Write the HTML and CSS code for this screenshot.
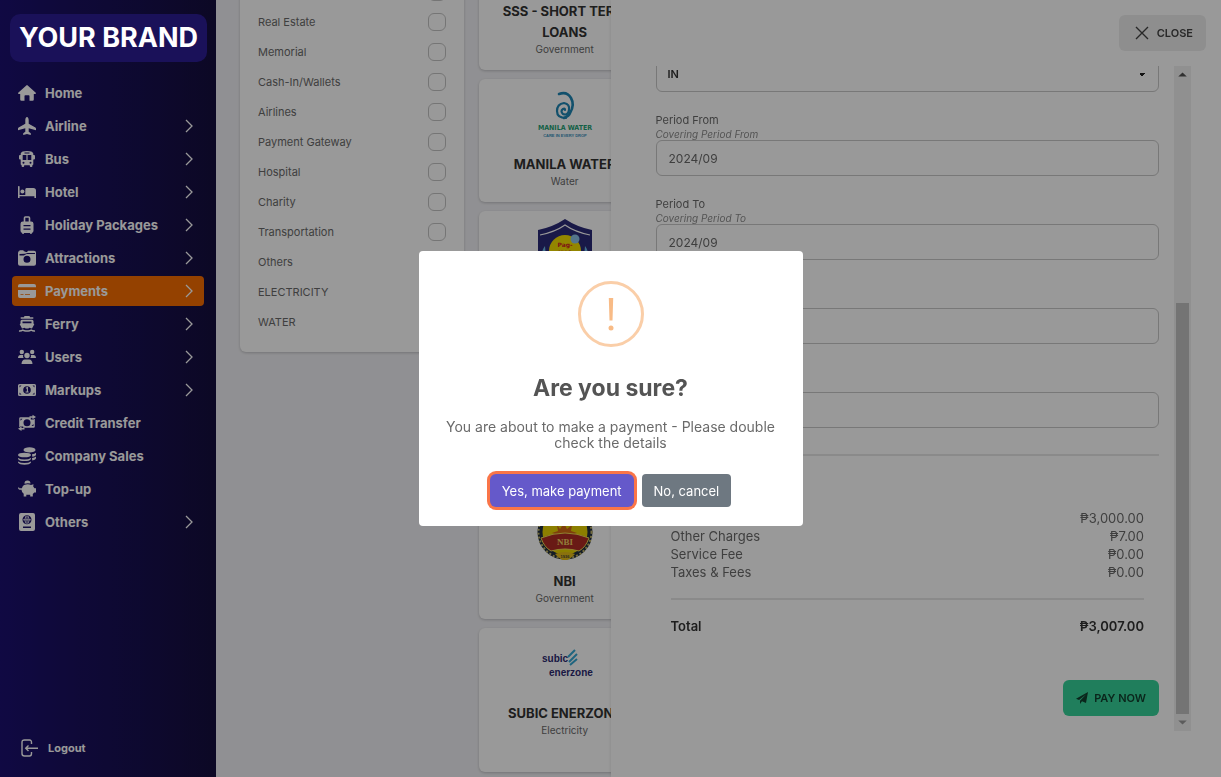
FILE: index.html
```html
<!DOCTYPE html>
<html lang="en">
<head>
<meta charset="utf-8">
<meta name="viewport" content="width=device-width, initial-scale=1">
<title>Payments</title>
<link rel="stylesheet" href="styles.css">
</head>
<body>
<svg width="0" height="0" class="sprite" aria-hidden="true">
  <symbol id="chevron" viewBox="0 0 10 14"><path d="M2 1l6 6-6 6" fill="none" stroke="currentColor" stroke-width="1.3"/></symbol>
</svg>
<div class="app">
  <aside class="sidebar">
    <div class="brand">YOUR BRAND</div>
    <nav class="nav">
      <a class="nav-item" href="#"><svg class="icon" viewBox="0 0 18 18"><path d="M8.3 1.4q.7-.6 1.4 0L17.8 8.700q.5 1-.6 1.200H15.800V15.500q0 1.300-1.300 1.300H11.500V12q0-.8-.8-.8H7.300q-.8 0-.8.8v4.800H3.500Q2.200 16.800 2.200 15.500V9.900H.8Q-.3 9.700.2 8.700z"/></svg><span>Home</span></a>
      <a class="nav-item" href="#"><svg class="icon" viewBox="0 0 18 18"><path d="M9 0c1 0 1.700 1.800 1.700 3.200v3.500l6.700 3.900q.6.400.6 1v1.700l-7.300-2.100v3.600l2.100 1.500V18L9 17l-3.800 1v-1.700l2.100-1.500v-3.600L0 13.300v-1.700q0-.6.6-1l6.700-3.900V3.200C7.300 1.800 8 0 9 0z"/></svg><span>Airline</span><svg class="chev"><use href="#chevron"/></svg></a>
      <a class="nav-item" href="#"><svg class="icon" viewBox="0 0 18 18"><path fill-rule="evenodd" d="M9 1c3.500 0 6 .8 6.300 2.500V5h.7q1 0 1 1v2.500q0 1-1 1h-.7v4.800q0 .7-.9.800v1q0 1-1 1h-.6q-1 0-1-1v-.9H6.200v.9q0 1-1 1h-.6q-1 0-1-1v-1q-.9-.1-.9-.800V9.500H2q-1 0-1-1V6q0-1 1-1h.7V3.500C3 1.800 5.500 1 9 1zM6.500 2.500v1h5v-1zM4.700 5v5h3.700V5zm4.900 0v5h3.700V5zM5.500 11.700a1 1 0 100 2 1 1 0 000-2zm7 0a1 1 0 100 2 1 1 0 000-2z"/></svg><span>Bus</span><svg class="chev"><use href="#chevron"/></svg></a>
      <a class="nav-item" href="#"><svg class="icon" viewBox="0 0 18 18"><path d="M0 3.500Q0 3 .8 3t.8.500V12h5.700V6.500Q7.300 5 8.500 5H15.300q2.700 0 2.700 2.700V15h-1.600v-1.700H1.600V15H0z"/><circle cx="4.400" cy="8.500" r="2"/></svg><span>Hotel</span><svg class="chev"><use href="#chevron"/></svg></a>
      <a class="nav-item" href="#"><svg class="icon" viewBox="0 0 18 18"><path fill-rule="evenodd" d="M5.700 5.500V2Q5.700.2 7.300.2h3.400q1.600 0 1.600 1.800v3.500h.9q2.300 0 2.300 2.200v7q0 2-1.800 2.200v1h-1.500v-1H5.800v1H4.300v-1Q2.500 16.700 2.500 14.700v-7q0-2.200 2.300-2.200zM7.300 1.700v3.800h3.400V1.700zM5.500 9v1.300h7V9zm0 3.400v1.300h7v-1.300z"/></svg><span>Holiday Packages</span><svg class="chev"><use href="#chevron"/></svg></a>
      <a class="nav-item" href="#"><svg class="icon" viewBox="0 0 18 18"><path fill-rule="evenodd" d="M1.500 2V1.200H5.500V2L8 3h1l1-1.300h6Q18 1.700 18 3.500v11.300q0 2-2 2H2q-2 0-2-2V4Q0 2 1.500 2zM1.500 5v1.400h4.300L8.500 5H17V4H9.500L7 4.700zM9 6.800a3.500 3.500 0 100 7 3.500 3.500 0 000-7z"/></svg><span>Attractions</span><svg class="chev"><use href="#chevron"/></svg></a>
      <a class="nav-item active" href="#"><svg class="icon" viewBox="0 0 18 18"><path fill-rule="evenodd" d="M2 2h14q2 0 2 2v1.300H0V4Q0 2 2 2zM0 8h18v6q0 2-2 2H2q-2 0-2-2zm2.500 3.900v.8h3v-.8zm4.500 0v.8h5v-.8z"/></svg><span>Payments</span><svg class="chev"><use href="#chevron"/></svg></a>
      <a class="nav-item" href="#"><svg class="icon" viewBox="0 0 18 18"><path fill-rule="evenodd" d="M6.500 1h5l.6 1.300h3.200v1.500H2.700V2.300h3.200zM4 4.700h10q1.500 0 1.500 1.500v2.300l.8.700-2.300 4.300q-1.200 0-2.300-.8-1.400.9-2.700.9t-2.700-.9q-1.100.8-2.300.8L1.700 9.200l.8-.7V6.200q0-1.500 1.500-1.500zm.5 1.800v1.700h9V6.500z"/><path d="M1 16q2 .3 3.800-.8Q7 16.400 9 15.900q2 .5 4.200-.7Q15 16.300 17 16" fill="none" stroke="currentColor" stroke-width="1.500"/></svg><span>Ferry</span><svg class="chev"><use href="#chevron"/></svg></a>
      <a class="nav-item" href="#"><svg class="icon" viewBox="0 0 18 18"><circle cx="3.800" cy="4" r="2.200"/><circle cx="14.200" cy="4" r="2.200"/><circle cx="9" cy="7.500" r="2.700"/><path d="M0 10q.2-3 2.500-3h2.700L5 8.500q.2 1 .9 1.500zM18 10q-.2-3-2.500-3h-2.700L13 8.500q-.2 1-.9 1.500zM3.500 16q.3-4.500 3.500-4.500h4q3.200 0 3.500 4.500z"/></svg><span>Users</span><svg class="chev"><use href="#chevron"/></svg></a>
      <a class="nav-item" href="#"><svg class="icon" viewBox="0 0 18 18"><path fill-rule="evenodd" d="M1.500 3h15Q18 3 18 4.500v9q0 1.500-1.500 1.500h-15Q0 15 0 13.500v-9Q0 3 1.500 3zM9 5.200a3.800 3.800 0 100 7.600 3.800 3.800 0 000-7.600zM1.500 4.500v2l2-2zm15 0h-2l2 2zm-15 9h2l-2-2zm15 0v-2l-2 2z"/><path d="M7.900 7.200l1.500-.7v4M7.600 11h3" fill="none" stroke="currentColor" stroke-width="1.100"/></svg><span>Markups</span><svg class="chev"><use href="#chevron"/></svg></a>
      <a class="nav-item" href="#"><svg class="icon" viewBox="0 0 18 18"><path fill-rule="evenodd" d="M1.200 4.500q0-1.200 1.300-1.200h10.300v2.200h2.700l1.300-.8v7.800q0 1.200-1.300 1.200H5.200v-1.200H2.500l-1.300.8zM9 5.200a3.500 3.500 0 100 7 3.500 3.500 0 000-7zM2.500 4.800v2l2-2zm13 7.300v-2l-2 2z"/><path d="M14.500.8L18 3l-3.500 2.300V3.700h-3V2.300h3zM3.500 12.500L0 14.700 3.500 17v-1.600h3V14h-3z"/></svg><span>Credit Transfer</span></a>
      <a class="nav-item" href="#"><svg class="icon" viewBox="0 0 18 18"><ellipse cx="11.500" cy="2.900" rx="6" ry="2.700"/><path d="M14 7.300q2.700-.5 4-1.600v1.700q0 1.600-3.700 2.400zM14 11q2.700-.5 4-1.600v1.700q0 1.600-3.700 2.400z"/><ellipse cx="6.500" cy="8" rx="6.500" ry="2.300"/><path d="M0 10.900q2.500 1.700 6.500 1.700t6.500-1.700v1q-1.500 2.200-6.500 2.200T0 11.900zM0 14.400q2.500 1.700 6.500 1.700T13 14.400v1.100q-1.500 2.200-6.500 2.200T0 15.500z"/></svg><span>Company Sales</span></a>
      <a class="nav-item" href="#"><svg class="icon" viewBox="0 0 18 18"><path d="M6.500 3.700a3 3 0 016-.2q-3-.8-6 .2zM6 5q4-1.300 7 0l2.500-.7-.3 2.200 1.300 1.700H18v4.200h-1.700l-1.500 1.500V16.500h-2.600v-1.700H8.300v1.700H5.700v-2.800Q3.500 12 3.500 9.700H1.500Q0 9.500 0 7.500h1.200v.8h2.700Q4.500 5.800 6 5z"/></svg><span>Top-up</span></a>
      <a class="nav-item" href="#"><svg class="icon" viewBox="0 0 18 18"><path fill-rule="evenodd" d="M3 0h12q2 0 2 2v14q0 2-2 2H3q-2 0-2-2V2q0-2 2-2zm6 2.300a4.500 4.500 0 100 9 4.500 4.500 0 000-9zM5 13.500V15h8v-1.500z"/><path d="M5 6.800h8M9 2.800v8M8 3q-2.500 3.800 0 7.600M10 3q2.500 3.800 0 7.600" fill="none" stroke="currentColor" stroke-width=".8"/></svg><span>Others</span><svg class="chev"><use href="#chevron"/></svg></a>
    </nav>
    <a class="logout" href="#"><svg class="icon" viewBox="0 0 18 18"><path d="M11.500 5V3.500Q11.500 1 9.500 1h-5Q2 1 2 3.500v11Q2 17 4.500 17h5q2 0 2-2.500V13M18 9.300H6M8.500 6.500L5.700 9.300l2.800 2.800" fill="none" stroke="currentColor" stroke-width="1.400"/></svg><span>Logout</span></a>
  </aside>

  <main class="main">
    <section class="filters">
      <label class="filter"><span></span><input type="checkbox" aria-label="Category"></label>
      <label class="filter"><span>Real Estate</span><input type="checkbox"></label>
      <label class="filter"><span>Memorial</span><input type="checkbox"></label>
      <label class="filter"><span>Cash-In/Wallets</span><input type="checkbox"></label>
      <label class="filter"><span>Airlines</span><input type="checkbox"></label>
      <label class="filter"><span>Payment Gateway</span><input type="checkbox"></label>
      <label class="filter"><span>Hospital</span><input type="checkbox"></label>
      <label class="filter"><span>Charity</span><input type="checkbox"></label>
      <label class="filter"><span>Transportation</span><input type="checkbox"></label>
      <div class="filter">Others</div>
      <div class="filter">ELECTRICITY</div>
      <div class="filter">WATER</div>
    </section>

    <section class="billers">
      <article class="biller tall">
        <div class="logo"></div>
        <h3>SSS - SHORT TERM<br>LOANS</h3><p>Government</p>
      </article>
      <article class="biller">
        <svg class="logo" viewBox="0 0 56 56">
          <g fill="none" stroke="#1e86b4" stroke-linecap="round"><path d="M22 7q8-3 12 4t-1 15q-1 3-6 5" stroke-width="2.600"/><path d="M29 31q-9 0-9-7t7-8q6 1 5 7t-6 4q-3-3 0-5 2-1 2 1" stroke-width="2.200"/></g>
          <text x="28" y="43" class="mw-name">MANILA WATER</text>
          <text x="28" y="50" class="mw-tag">CARE IN EVERY DROP</text>
        </svg>
        <h3>MANILA WATER</h3><p>Water</p>
      </article>
      <article class="biller tall">
        <svg class="logo" viewBox="0 0 56 56">
          <path d="M28 0Q40 8 55 11v45H1V11Q16 8 28 0z" fill="#2b2a78"/>
          <path d="M3 16Q18 13 28 6q10 7 25 10" fill="none" stroke="#fff" stroke-width="1.200"/>
          <circle cx="28" cy="32" r="16" fill="#f5e000"/><circle cx="38" cy="20" r="4.500" fill="#8cc4ea"/>
          <path d="M8 27q-4 5-3 12h4zM48 27q4 5 3 12h-4z" fill="#6bb8e4"/>
          <text x="28" y="28" class="pag">Pag-</text><text x="28" y="36" class="pag">IBIG</text>
        </svg>
      </article>
      <article class="biller"></article>
      <article class="biller">
        <svg class="logo" viewBox="0 0 56 56">
          <circle cx="28" cy="28" r="25" fill="#e9d400" stroke="#22303f" stroke-width="5"/>
          <circle cx="28" cy="28" r="26.500" fill="none" stroke="#c2b56a" stroke-width="2" stroke-dasharray="2 2"/>
          <path d="M20 21l3 4 4-6 3 6 5-4-1 6 6 2-5 2H20l-5-2 6-2z" fill="#d46a14"/>
          <path d="M4 34q12-5 24-5t24 5q-3 9-10 13-7-2-14-2t-14 2Q7 43 4 34z" fill="#b02c24" stroke="#efdc50"/>
          <text x="28" y="41" class="nbi">NBI</text>
          <path d="M18 50q10-4 20 0-4 5-10 7-6-2-10-7z" fill="#e6bd18"/><text x="28" y="54" class="nbi-year">1936</text>
        </svg>
        <h3>NBI</h3><p>Government</p>
      </article>
      <article class="biller tall">
        <svg class="logo" viewBox="0 0 56 56">
          <text x="5" y="26" class="subic">subic</text><text x="12" y="40" class="subic">enerzone</text>
          <path d="M31 21l7-7M32 26l8-8M33 29l7-6" stroke="#35a9d4" stroke-width="2"/>
        </svg>
        <h3>SUBIC ENERZONE</h3><p>Electricity</p>
      </article>
    </section>
  </main>

  <section class="drawer">
    <header class="drawer-head">
      <button class="btn close" type="button"><svg viewBox="0 0 14 14"><path d="M1 1l12 12M13 1L1 13" stroke="currentColor" stroke-width="1.400"/></svg>CLOSE</button>
    </header>
    <div class="drawer-body">
      <form class="form">
        <select class="control" aria-label="Type"><option>IN</option></select>
        <div class="field"><label for="from">Period From</label><small>Covering Period From</small><input class="control" id="from" value="2024/09"></div>
        <div class="field"><label for="to">Period To</label><small>Covering Period To</small><input class="control" id="to" value="2024/09"></div>
        <div class="field"><input class="control" aria-label="Account"></div>
        <div class="field"><input class="control" aria-label="Amount"></div>
        <hr class="rule">
        <dl class="summary">
          <div><dt></dt><dd>₱3,000.00</dd></div>
          <div><dt>Other Charges</dt><dd>₱7.00</dd></div>
          <div><dt>Service Fee</dt><dd>₱0.00</dd></div>
          <div><dt>Taxes &amp; Fees</dt><dd>₱0.00</dd></div>
          <div class="total"><dt>Total</dt><dd>₱3,007.00</dd></div>
        </dl>
        <button class="btn pay" type="button"><svg viewBox="0 0 12 12"><path d="M12 0l-2 11-4-1.700L4 12V8.700L10 2.500 3 8 0 6.800z"/></svg>PAY NOW</button>
      </form>
      <div class="scrollbar" aria-hidden="true"><i class="arrow up"></i><i class="thumb"></i><i class="arrow down"></i></div>
    </div>
  </section>
</div>

<div class="backdrop">
  <div class="dialog" role="dialog" aria-modal="true" aria-labelledby="dlg-title">
    <svg class="warn" viewBox="0 0 66 66"><circle cx="33" cy="33" r="31.500" fill="none" stroke="#facea8" stroke-width="3"/><path d="M30.800 17h4.400l-.7 22.500h-3z" fill="#f8bb86"/><circle cx="33" cy="47" r="2.500" fill="#f8bb86"/></svg>
    <h2 id="dlg-title">Are you sure?</h2>
    <p>You are about to make a payment - Please double check the details</p>
    <div class="actions"><button class="confirm" type="button">Yes, make payment</button><button class="cancel" type="button">No, cancel</button></div>
  </div>
</div>
</body>
</html>
```
FILE: styles.css
```css
* { box-sizing: border-box; }
body { margin: 0; font-family: Inter, "Open Sans", sans-serif; color: #6a6a6a; }
h2, h3, p, dl, dd { margin: 0; }
button, input, select { font: inherit; color: inherit; }
.sprite { position: absolute; }

.app { display: flex; height: 100vh; overflow: hidden; background: #f1f1f5; }

/* Sidebar */
.sidebar {
  flex: 0 0 216px;
  display: flex;
  flex-direction: column;
  padding: 14px 12px 20px;
  background: linear-gradient(90deg, #1b1070, #150e3e);
}
.brand {
  position: relative;
  z-index: 20;
  margin: 0 -3px 16px -2px;
  border-radius: 10px;
  background: #1a1159;
  color: #fff;
  font-size: 27px;
  font-weight: 700;
  line-height: 48px;
  text-align: center;
  white-space: nowrap;
}
.nav { display: flex; flex-direction: column; gap: 3px; }
.nav-item {
  display: flex;
  align-items: center;
  gap: 9px;
  height: 30px;
  padding: 0 10px 0 6px;
  border-radius: 4px;
  color: #fff;
  font-size: 13px;
  font-weight: 700;
  text-decoration: none;
}
.nav-item.active { background: #f76d00; }
.icon { width: 18px; height: 18px; fill: currentColor; }
.chev { width: 10px; height: 14px; margin-left: auto; }
.logout {
  display: flex;
  align-items: center;
  gap: 10px;
  margin-top: auto;
  padding-left: 8px;
  color: #fff;
  font-size: 11px;
  font-weight: 700;
  text-decoration: none;
}

/* Page content */
.main { flex: 1; display: flex; align-items: flex-start; gap: 15px; padding: 0 30px 0 24px; }
.filters {
  flex: 0 0 224px;
  margin-top: -23px;
  padding: 0 18px 15px;
  border-radius: 6px;
  background: #fff;
  box-shadow: 0 1px 3px #0003;
}
.filter { display: flex; align-items: center; justify-content: space-between; height: 30px; font-size: 11px; }
.filter input {
  appearance: none;
  width: 18px;
  height: 18px;
  margin: 0;
  border: 1px solid #c4c4c4;
  border-radius: 6px;
}
.billers { flex: 1; display: grid; grid-template-columns: repeat(4, 1fr); gap: 9px; margin-top: -74px; }
.biller {
  grid-column: 1;
  display: flex;
  flex-direction: column;
  align-items: center;
  min-height: 123px;
  padding: 8px 0 14px;
  border-radius: 6px;
  background: #fff;
  box-shadow: 0 1px 3px #0003;
  text-align: center;
}
.biller.tall { min-height: 144px; }
.biller h3 { margin-top: 11px; color: #333; font-size: 13px; font-weight: 700; line-height: 21px; white-space: nowrap; }
.biller p { font-size: 10px; line-height: 13px; }
.logo { flex: none; width: 56px; height: 56px; }
.logo text { text-anchor: middle; }
.mw-name { fill: #1fa276; font: 700 7px "DejaVu Sans Condensed", "DejaVu Sans", sans-serif; }
.mw-tag { fill: #3b93bd; font: 700 4px "Liberation Sans", sans-serif; }
.pag { fill: #d42020; font: 700 6px "DejaVu Sans", sans-serif; }
.nbi { fill: #f0d060; font: 700 9px "Liberation Serif", serif; }
.nbi-year { fill: #443; font: 700 4px "Liberation Sans", sans-serif; }
.logo .subic { fill: #2c2a70; text-anchor: start; font: 700 10px "Liberation Sans", sans-serif; }

/* Payment drawer */
.drawer {
  position: fixed;
  inset: 0 0 0 50%;
  display: flex;
  flex-direction: column;
  padding: 15px 15px 46px 45px;
  background: #fff;
  box-shadow: 0 0 4px #0002;
}
.drawer-head { display: flex; justify-content: flex-end; padding-bottom: 15px; }
.btn {
  display: flex;
  align-items: center;
  gap: 6px;
  height: 36px;
  border: 0;
  border-radius: 6px;
  font-size: 11px;
  font-weight: 600;
}
.close { gap: 8px; padding: 0 13px 0 16px; background: #ededed; color: #444; }
.close svg { width: 14px; height: 14px; }
.drawer-body { flex: 1; min-height: 0; display: flex; gap: 15px; padding-right: 15px; overflow: hidden; }
.form { flex: 1; display: flex; flex-direction: column; margin-top: -10px; }
.control {
  flex: none;
  width: 100%;
  height: 36px;
  padding: 0 12px;
  border: 1px solid #c8c8c8;
  border-radius: 6px;
  background: #fff;
  font-size: 12px;
}
select.control {
  appearance: none;
  padding-left: 11px;
  background: linear-gradient(45deg, transparent 50%, #222 50%) right 16px center / 3px 3px no-repeat,
    linear-gradient(-45deg, transparent 50%, #222 50%) right 13px center / 3px 3px no-repeat, #fff;
  color: #333;
  font-size: 11px;
  font-weight: 600;
}
.field { flex: none; display: flex; flex-direction: column; justify-content: flex-end; min-height: 84px; }
.field label { font-size: 11px; line-height: 16px; }
.field small { color: #8c8c8c; font-size: 10px; font-style: italic; line-height: 12px; }
.rule { width: 100%; height: 2px; margin: 26px 0 53px; border: 0; background: #e6e6e6; }
.summary { padding: 0 15px; font-size: 13px; line-height: 18px; }
.summary div { display: flex; justify-content: space-between; }
.summary .total { margin-top: 17px; padding-top: 17px; border-top: 2px solid #e6e6e6; color: #333; font-weight: 600; }
.pay { align-self: flex-end; margin-top: 45px; padding: 0 13px; background: #36d399; color: #12402f; }
.pay svg { width: 12px; height: 12px; fill: currentColor; }
.scrollbar { flex: 0 0 17px; display: flex; flex-direction: column; align-items: center; background: #f0f0f0; }
.thumb { flex: 1; width: 13px; margin-top: 220px; background: #c1c1c1; }
.arrow { width: 17px; height: 17px; background: #505050; clip-path: polygon(50% 38%, 75% 62%, 25% 62%); }
.arrow.down { background: #999; clip-path: polygon(50% 62%, 75% 38%, 25% 38%); }

/* Confirmation dialog */
.backdrop { position: fixed; inset: 0; z-index: 10; display: grid; place-items: center; background: rgba(0, 0, 0, .4); }
.dialog {
  display: flex;
  flex-direction: column;
  align-items: center;
  width: 384px;
  padding: 30px 20px 19px;
  border-radius: 4px;
  background: #fff;
  text-align: center;
}
.warn { width: 66px; height: 66px; }
.dialog h2 { margin-top: 25px; color: #545454; font-size: 23px; font-weight: 700; line-height: 32px; }
.dialog p { margin-top: 15px; color: #6a6a6a; font-size: 14px; line-height: 16px; }
.actions { display: flex; gap: 8px; margin-top: 23px; }
.actions button { height: 33px; padding: 0 12px; border: 0; border-radius: 4px; color: #fff; font-size: 13px; white-space: nowrap; }
.actions .confirm { background: #6559ca; border-radius: 6px; box-shadow: 0 0 0 3px #fa7548; }
.actions .cancel { background: #6e7881; }
```
